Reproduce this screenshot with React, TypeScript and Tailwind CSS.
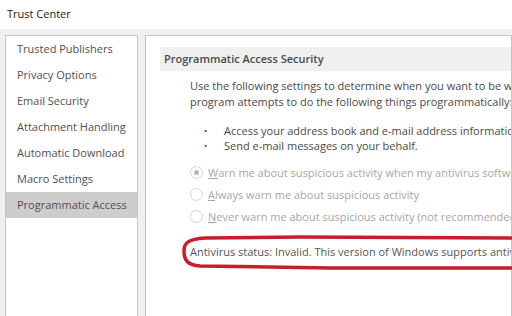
import React from "react";

const font = { fontFamily: '"Open Sans", "Noto Sans", sans-serif' };

const items = [
  "Trusted Publishers",
  "Privacy Options",
  "Email Security",
  "Attachment Handling",
  "Automatic Download",
  "Macro Settings",
  "Programmatic Access",
];

function Radio({ checked }: { checked?: boolean }) {
  return (
    <span className="relative inline-flex h-[13px] w-[13px] shrink-0 items-center justify-center rounded-full border border-[#d4d4d4] bg-white">
      {checked && <span className="h-[5px] w-[5px] rounded-full bg-[#b8b8b8]" />}
    </span>
  );
}

export default function App() {
  return (
    <div className="relative h-[316px] w-[512px] overflow-hidden bg-[#f0f0f0] text-[11px]" style={font}>
      <div className="flex h-[29px] items-center bg-white pl-[7px] text-[#1a1a1a]">Trust Center</div>
      <div className="flex gap-[7px] pl-[5px] pt-[6px]">
        <div className="h-[300px] w-[133px] shrink-0 border border-[#c6c6c6] bg-white">
          {items.map((it, i) => (
            <div
              key={it}
              className={`flex h-[26px] items-center whitespace-nowrap pl-[11px] text-[#505050] ${i === 6 ? "bg-[#cdcdcd]" : ""}`}
            >
              {it}
            </div>
          ))}
        </div>
        <div className="h-[300px] min-w-0 flex-1 overflow-hidden border border-[#c6c6c6] bg-white pl-[14px] pt-[11px]">
          <div className="flex h-[24px] items-center whitespace-nowrap bg-[#f0f0f0] pl-[4px] font-semibold text-[#4a4a4a]">
            Programmatic Access Security
          </div>
          <div className="whitespace-nowrap pl-[30px] pt-[7px] leading-[16px] text-[#4a4a4a]">
            <div>Use the following settings to determine when you want to be warned if a</div>
            <div>program attempts to do the following things programmatically:</div>
            <div className="mt-[13px] flex flex-col leading-[15px]">
              <div className="flex"><span className="w-[34px] shrink-0 pl-[14px] text-[9px]">•</span><span>Access your address book and e-mail address information.</span></div>
              <div className="flex"><span className="w-[34px] shrink-0 pl-[14px] text-[9px]">•</span><span>Send e-mail messages on your behalf.</span></div>
            </div>
            <div className="mt-[12px] flex flex-col gap-[7px] text-[#a6a6a6]">
              <div className="flex h-[15px] items-center gap-[5px]"><Radio checked /><span><u>W</u>arn me about suspicious activity when my antivirus software is inactive</span></div>
              <div className="flex h-[15px] items-center gap-[5px]"><Radio /><span><u>A</u>lways warn me about suspicious activity</span></div>
              <div className="flex h-[15px] items-center gap-[5px]"><Radio /><span><u>N</u>ever warn me about suspicious activity (not recommended)</span></div>
            </div>
            <div className="mt-[20px] text-[#555]">Antivirus status: Invalid. This version of Windows supports antivirus detection</div>
          </div>
        </div>
      </div>
      <svg className="pointer-events-none absolute left-0 top-0" width="512" height="316" viewBox="0 0 512 316">
        <path
          d="M530 238 L300 237 L205 238 C188 239 184 243 184 251 C184 261 188 265 200 266 L330 268 L530 268"
          fill="none"
          stroke="#c81e2a"
          strokeWidth="3.5"
          strokeLinecap="round"
        />
      </svg>
    </div>
  );
}
